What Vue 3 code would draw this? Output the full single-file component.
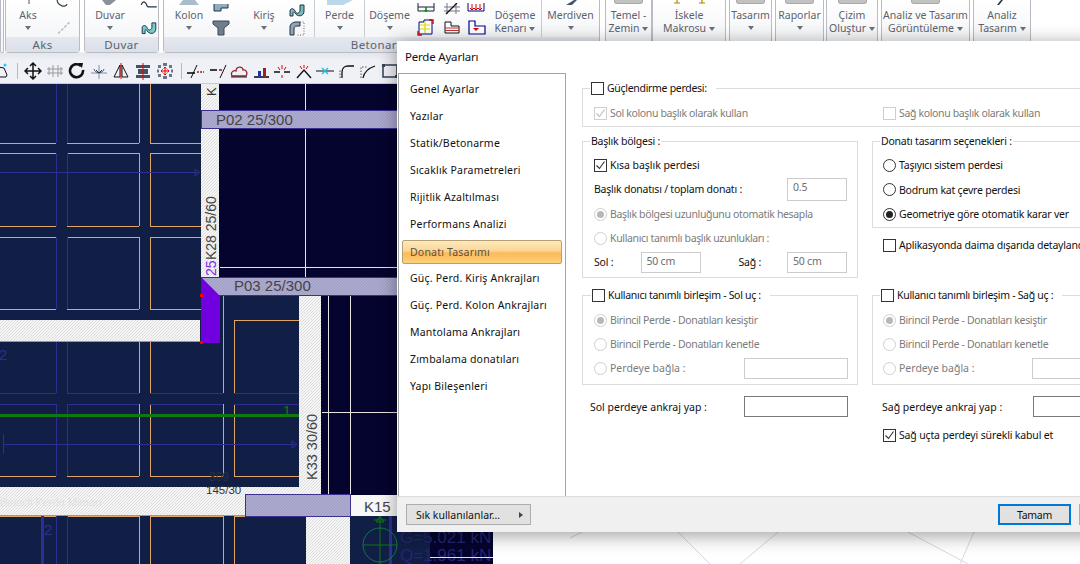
<script setup>
const menu = ['Genel Ayarlar','Yazılar','Statik/Betonarme','Sıcaklık Parametreleri','Rijitlik Azaltılması','Performans Analizi','Donatı Tasarımı','Güç. Perd. Kiriş Ankrajları','Güç. Perd. Kolon Ankrajları','Mantolama Ankrajları','Zımbalama donatıları','Yapı Bileşenleri']
</script>

<template>
  <div class="screen">
    <div class="ribbon">
      <div class="panel stub"></div>
      <div class="panel aks">
        <div class="tool w44">
          <svg class="top" width="20" height="5" viewBox="0 0 20 5"><path d="M11 0v4" stroke="#555" /></svg>
          <span>Aks</span><i class="drop"></i>
        </div>
        <div class="icons one">
          <svg width="18" height="18" viewBox="0 0 18 18"><path d="M2 0c0 3 2 5 5 6 2 1 5 0 5-2" fill="none" stroke="#345" stroke-width="1.3"/></svg>
          <svg width="18" height="18" viewBox="0 0 18 18"><path d="M3 15L15 3" stroke="#bbb" stroke-width="1.5" stroke-dasharray="3 1.5"/></svg>
        </div>
        <b class="cap">Aks</b>
      </div>
      <div class="panel duvar">
        <div class="tool w50">
          <svg class="top" width="24" height="5" viewBox="0 0 24 5"><path d="M4 0h14l-6 5H8z" fill="#8a9099"/></svg>
          <span>Duvar</span><i class="drop"></i>
        </div>
        <div class="icons one">
          <svg width="20" height="18" viewBox="0 0 20 18"><path d="M2 5c2-5 5-3 6 1l1 1h9" fill="none" stroke="#234" stroke-width="1.3"/></svg>
          <svg width="20" height="18" viewBox="0 0 20 18"><path d="M3 15V9c0-3 4-3 5 0s4 3 5 0V4h4v6c0 6-7 6-9 2-1-2-2-1-2 0v3z" fill="#7cc" stroke="#234"/></svg>
        </div>
        <b class="cap">Duvar</b>
      </div>
      <div class="panel beton">
        <div class="betonRow">
          <div class="tool kolon">
            <svg class="top" width="24" height="5" viewBox="0 0 24 5"><path d="M6 0h12l4 5H2z" fill="#a9bccb"/></svg>
            <span>Kolon</span><i class="drop"></i>
          </div>
          <div class="icons narrow">
            <svg width="18" height="16" viewBox="0 0 18 16"><path d="M2-6h14v10H9v3H2z" fill="#8eabc0" stroke="#234"/></svg>
            <svg width="18" height="16" viewBox="0 0 18 16"><path d="M1 1h16v3l-5 4v7H6V8L1 4z" fill="#6d7f8e" stroke="#445"/></svg>
          </div>
          <div class="tool kiris">
            <span>Kiriş</span><i class="drop"></i>
          </div>
          <div class="icons wide">
            <svg width="20" height="16" viewBox="0 0 20 16"><path d="M3 12V7c0-3 4-3 5 0s4 3 5 0V1h4v6c0 6-7 6-9 2-1-2-2-1-2 0v3z" fill="#7bb" stroke="#234"/></svg>
            <svg width="20" height="16" viewBox="0 0 20 16"><path d="M3 15V7c0-3 3-5 6-5h4v4h-3c-2 0-3 1-3 3v6z" fill="#8ea6b8" stroke="#234"/><path d="M13 2h4v13h-7" fill="none" stroke="#666" stroke-dasharray="1 1.5"/></svg>
          </div>
          <div class="tool perde sep">
            <svg class="top" width="30" height="5" viewBox="0 0 30 5"><path d="M2 0h26l-10 5H2z" fill="#bcd6ea"/></svg>
            <span>Perde</span><i class="drop"></i>
          </div>
          <div class="tool doseme sep">
            <span>Döşeme</span><i class="drop"></i>
          </div>
          <div class="icons three">
            <svg width="20" height="14" viewBox="0 0 20 14"><path d="M1-4h16v12H1zM1 4h16M9 4v4" fill="none" stroke="#123"/><path d="M9 4v5M7 7l2 2 2-2" fill="none" stroke="#0a0" /></svg>
            <svg width="20" height="14" viewBox="0 0 20 14"><path d="M2 4h16M2 8h16M5 0v11M14 0v11" stroke="#778"/><path d="M4 11L15 0" stroke="#111" stroke-width="1.2"/></svg>
            <svg width="20" height="14" viewBox="0 0 20 14"><path d="M1-3h16v11H1z" fill="none" stroke="#008"/><path d="M5 1v5M9 1v5M13 1v5M3 5l2 2 2-2M7 5l2 2 2-2M11 5l2 2 2-2" fill="none" stroke="#d00"/></svg>
            <svg width="20" height="18" viewBox="0 0 20 18"><path d="M2 15V3h5v-2h8v14z" fill="#fff" stroke="#008"/><path d="M3 6h10M3 10h10M8 2v12" stroke="#dd0" stroke-width="1.2"/><path d="M1 12v4h4M12 1h4v4" fill="none" stroke="#d00" stroke-width="1.4"/></svg>
            <svg width="20" height="18" viewBox="0 0 20 18"><path d="M3 14V3h6v4h8v7z" fill="#fff" stroke="#111"/><path d="M3 9h14M3 11.5h14" stroke="#b33"/></svg>
            <svg width="20" height="18" viewBox="0 0 20 18"><path d="M2 2h6v5h10v8H2z" fill="#fff" stroke="#008" stroke-width="1.2"/><path d="M6 9h6l-3 3z" fill="#d00"/></svg>
          </div>
          <div class="tool kenar">
            <span>Döşeme</span><span>Kenarı<i class="drop in"></i></span>
          </div>
          <div class="tool merdiven sep">
            <svg class="top" width="14" height="5" viewBox="0 0 14 5"><path d="M2 5L10 0h3L8 5z" fill="#456"/></svg>
            <span>Merdiven</span><i class="drop"></i>
          </div>
        </div>
        <b class="cap">Betonarme</b>
      </div>
      <div class="panel p-temel">
        <u class="nub"></u><span>Temel -</span><span>Zemin<i class="drop in"></i></span>
      </div>
      <div class="panel p-iskele">
        <svg class="top" width="34" height="5" viewBox="0 0 34 5"><path d="M5 0v3M2 3h6M30 0v3M27 3h6" stroke="#a80" stroke-width="1.2"/></svg>
        <span>İskele</span><span>Makrosu<i class="drop in"></i></span>
      </div>
      <div class="panel p-tasarim"><u class="nub"></u><span>Tasarım</span><i class="drop"></i></div>
      <div class="panel p-rapor"><u class="nub"></u><span>Raporlar</span><i class="drop"></i></div>
      <div class="panel p-cizim"><u class="nub"></u><span>Çizim</span><span>Oluştur<i class="drop in"></i></span></div>
      <div class="panel p-analiz"><u class="nub"></u><span>Analiz ve Tasarım</span><span>Görüntüleme<i class="drop in"></i></span></div>
      <div class="panel p-son">
        <svg class="top" width="14" height="5" viewBox="0 0 14 5"><path d="M2 5L6 0h2L4 5z" fill="#234"/></svg>
        <span>Analiz</span><span>Tasarım<i class="drop in"></i></span>
      </div>
    </div>

    <div class="toolbar">
      <svg width="10" height="20" viewBox="4 0 10 20"><path d="M-4 10l6-4 6 1 3 7-1 2H0z" fill="none" stroke="#111"/><circle cx="9" cy="4" r="1.5" fill="#2cf"/></svg>
      <em class="bar"></em>
      <div class="tgroup first">
        <svg width="18" height="20" viewBox="0 0 18 20"><path d="M9 2v16M1 10h16M6 5l3-3 3 3M6 15l3 3 3-3M4 7l-3 3 3 3M14 7l3 3-3 3" fill="none" stroke="#111" stroke-width="1.5"/></svg>
        <svg width="18" height="20" viewBox="0 0 18 20"><path d="M7 4v12M12 4v12M1 8h16M1 12h16M3 6v8M15 6v8" stroke="#999"/></svg>
        <svg width="18" height="20" viewBox="0 0 18 20"><path d="M13 5a6.5 6.5 0 1 0 2 4" fill="none" stroke="#111" stroke-width="2.6"/><path d="M10 2l5 0-1 5z" fill="#111"/></svg>
        <svg width="18" height="20" viewBox="0 0 18 20"><path d="M1 12h16M9 4v14" stroke="#7f8fa5"/><path d="M4 8c1 5 9 5 10 0" fill="none" stroke="#456"/><path d="M6 9l3 3 3-3" fill="none" stroke="#234"/></svg>
        <svg width="18" height="20" viewBox="0 0 18 20"><path d="M8 4L2 16h6zM10 4l6 12h-6z" fill="none" stroke="#111"/><path d="M9 2v16" stroke="#d00"/></svg>
        <svg width="18" height="20" viewBox="0 0 18 20"><path d="M2 4h14v3H2zM4 8h10v5H4zM2 14h14v3H2z" fill="#3d5566"/><path d="M9 2v17" stroke="#e00"/></svg>
        <svg width="18" height="20" viewBox="0 0 18 20"><path d="M2 4h3v3H2zM7 2h4v3H7zM13 4h3v3h-3zM2 13h3v3H2zM7 15h4v3H7zM13 13h3v3h-3zM1 8.500h2v3H1zM15 8.500h2v3h-2z" fill="#678"/><path d="M9 6v8M5 10h8M7.500 7.500L9 6l1.500 1.500M7.500 12.500L9 14l1.500-1.500M6.500 8.500L5 10l1.500 1.500M11.500 8.500L13 10l-1.500 1.500" fill="none" stroke="#e00"/></svg>
      </div>
      <em class="bar b2"></em>
      <svg width="18" height="20" viewBox="0 0 18 20"><path d="M0 12h8" stroke="#111" stroke-width="1.6"/><path d="M4 17L10 4" stroke="#111"/><path d="M10 11h7" stroke="#922" stroke-dasharray="2 1" stroke-width="1.6"/></svg>
      <svg width="18" height="20" viewBox="0 0 18 20"><path d="M1 9h7" stroke="#111" stroke-width="1.6"/><path d="M10 9h3" stroke="#922" stroke-width="1.6"/><path d="M11 17L17 4" stroke="#111"/></svg>
      <svg width="18" height="20" viewBox="0 0 18 20"><path d="M2 15c-2-4 2-6 4-5 0-5 7-5 7-1 3-1 5 3 3 6z" fill="none" stroke="#922" stroke-width="1.3"/><path d="M1 16h16" stroke="#222"/></svg>
      <svg width="18" height="20" viewBox="0 0 18 20"><path d="M2 16h15" stroke="#111" stroke-width="1.6"/><path d="M6 10h3v6H6z" fill="#23a"/><path d="M11 7h3v9h-3z" fill="#922"/></svg>
      <svg width="18" height="20" viewBox="0 0 18 20"><path d="M1 11h6M11 11h6" stroke="#111" stroke-width="1.6"/><path d="M9 4v4M9 14v3M5 6l2 3M13 6l-2 3" stroke="#d00"/></svg>
      <svg width="18" height="20" viewBox="0 0 18 20"><path d="M2 17l7-8 7 8" fill="none" stroke="#111" stroke-width="1.4"/><path d="M9 4v3M5 5l2 3M13 5l-2 3" stroke="#d00"/></svg>
      <svg width="18" height="20" viewBox="0 0 18 20"><path d="M0 10h18" stroke="#111"/><path d="M6 7l6 6M12 7l-6 6" stroke="#2bd" stroke-width="1.4"/></svg>
      <svg width="18" height="20" viewBox="0 0 18 20"><path d="M4 17V11c0-4 3-6 6-6h6" fill="none" stroke="#111" stroke-width="1.3"/><path d="M2 17V8" stroke="#555" stroke-dasharray="1.500 1.500"/></svg>
      <svg width="18" height="20" viewBox="0 0 18 20"><path d="M4 17c1-6 6-10 12-12" fill="none" stroke="#111" stroke-width="1.3"/><path d="M2 17V6h7" fill="none" stroke="#555" stroke-dasharray="1.500 1.500"/></svg>
      <svg width="18" height="20" viewBox="0 0 18 20"><rect x="2" y="4" width="14" height="12" fill="none" stroke="#234" stroke-width="1.4"/><path d="M1 3h3v3H1zM14 14h3v3h-3z" fill="#345"/></svg>
    </div>

    <svg class="canvas" width="1080" height="480" viewBox="0 84 1080 480">
      <defs>
        <pattern id="hatch" width="3" height="3" patternUnits="userSpaceOnUse">
          <rect width="3" height="3" fill="#f6f6f6"/>
          <path d="M0 3L3 0" stroke="#dcdcdc" stroke-width="1"/>
        </pattern>
        <pattern id="band" width="3" height="3" patternUnits="userSpaceOnUse">
          <rect width="3" height="3" fill="#a5a2c9"/>
          <path d="M0 3L3 0" stroke="#b0aed0" stroke-width="1"/>
        </pattern>
      </defs>
      <rect x="0" y="84" width="1080" height="480" fill="#111f47"/>
      <rect x="219" y="84" width="300" height="211" fill="#04042e"/>
      <rect x="321" y="295" width="200" height="201" fill="#04042e"/>
      <rect x="430" y="516" width="70" height="48" fill="#04042e"/>

      <path d="M0 143.500h56M67 143.500h72M150 143.500h51M0 153.500h56M67 153.500h72M150 153.500h51M0 226.500h56M67 226.500h72M150 226.500h51M0 237.500h56M67 237.500h72M150 237.500h51M0 309.500h56M67 309.500h72M150 309.500h51M139.500 84v59M150.500 84v59M139.500 153v73M150.500 153v73M139.500 237v72M150.500 237v72M223.500 296v46M234.500 320v22M234 320.500h65M139.500 342v51M150.500 342v51M223.500 342v51M234.500 342v51M139.500 404v72M150.500 404v72M223.500 404v72M234.500 404v72M0 476.500h56M67 476.500h72M150 476.500h73M234 476.500h65M139.500 516v48M150.500 516v48M223.500 516v48M234.500 516v48M0 516.500h56M67 516.500h72M150 516.500h73M234 516.500h72" stroke="#e0a563" fill="none"/>
      <path d="M56.500 84v59M67.500 84v59M56.500 153v73M67.500 153v73M56.500 237v72M67.500 237v72M56.500 342v51M67.500 342v51M56.500 404v72M67.500 404v72M56.500 516v48M67.500 516v48M0 393.500h56M67 393.500h72M150 393.500h73M234 393.500h65M0 404.500h56M67 404.500h72M150 404.500h73M234 404.500h65" stroke="#2e2e90" fill="none"/>
      <path d="M0 172.500h198M195 169v7l5-3.500zM3.500 434v20M3 444.500h292M292 441v7l5-3.500z" stroke="#2e2e90" fill="none"/>
      <path d="M305.500 84v211M220 267.500h178M328.500 295v201M350.500 295v201M322 412.500h76" stroke="#e8e4e0" fill="none"/>
      <path d="M0 415.500h299" stroke="#117711" stroke-width="3"/>
      <text x="283" y="416" class="t" font-size="14" fill="#117711">1</text>
      <text x="-1" y="360" class="t" font-size="15" fill="#2e2e90">2</text>

      <rect x="0" y="320" width="200" height="22" fill="url(#hatch)"/>
      <rect x="201" y="84" width="18" height="193" fill="url(#hatch)"/>
      <rect x="299" y="296" width="22" height="200" fill="url(#hatch)"/>
      <rect x="0" y="487" width="299" height="29" fill="url(#hatch)"/>
      <rect x="306" y="516" width="44" height="48" fill="url(#hatch)"/>
      <rect x="0" y="341" width="200" height="1" fill="#9a9a9a"/>
      <rect x="0" y="515" width="245" height="1" fill="#9a9a9a"/>

      <rect x="201.500" y="110.500" width="200" height="18" fill="url(#band)" stroke="#3a3090"/>
      <rect x="201.500" y="277.500" width="200" height="18" fill="url(#band)" stroke="#3a3090"/>
      <text x="216" y="125" class="t" font-size="15" fill="#444">P02 25/300</text>
      <text x="234" y="291" class="t" font-size="15" fill="#444">P03 25/300</text>
      <path d="M201 277L220 296V343H201z" fill="#7000e0"/>
      <rect x="200" y="341" width="3" height="3" fill="#f00"/>
      <rect x="200" y="294" width="3" height="3" fill="#f00"/>
      <rect x="245.500" y="494.500" width="105" height="22" fill="url(#band)" stroke="#3a3090"/>
      <rect x="351" y="495" width="50" height="21" fill="#f8f8f8"/>
      <text x="364" y="512" class="t" font-size="15" fill="#444">K15</text>
      <text transform="translate(216 96) rotate(-90)" class="t" font-size="13" fill="#333">K</text>
      <text transform="translate(216 260) rotate(-90)" class="t" font-size="14" fill="#444">K28 25/60</text>
      <text transform="translate(216 276) rotate(-90)" class="t" font-size="14" fill="#7a2be8">25</text>
      <text transform="translate(317 480) rotate(-90)" class="t" font-size="14.500" fill="#444">K33 30/60</text>
      <text x="209" y="481" class="t" font-size="12" fill="#2a3040">309</text>
      <text x="206" y="494" class="t" font-size="11.500" fill="#333">145/30</text>
      <text x="0" y="506" class="t" font-size="11" fill="#e2e2e2">Birincil Perde Mimarı</text>
      <text x="44" y="535" class="t" font-size="15" fill="#2e2e90">2</text>
      <path d="M42.500 516v48M390.500 516v48" stroke="#2e2e90" stroke-width="3"/>
      <circle cx="380" cy="545" r="17" fill="none" stroke="#117744"/>
      <path d="M374 520h12M380 516v48M363 545h34M376 522l4-6 4 6z" stroke="#117711" fill="none"/>
      <text x="400" y="543" class="t" font-size="17" fill="#262670">G=5.021 kN</text>
      <text x="400" y="561" class="t" font-size="17" fill="#262670">Q=1.961 kN</text>
      <path d="M430 557.500h63" stroke="#e8e4e0"/>
      <rect x="493" y="516" width="600" height="48" fill="#fff"/>
      <path d="M570 538l12-6M678 532l32 32M778 532l-38 32M908 532l60 32M974 532l-14 32" stroke="#d8d8de" fill="none"/>
    </svg>

    <div class="dialog">
      <div class="title">Perde Ayarları</div>
      <div class="body">
        <ul class="menu">
          <li v-for="m in menu" :key="m" :class="{ on: m === 'Donatı Tasarımı' }">{{ m }}</li>
        </ul>
        <div class="pane">
          <section class="group g-top">
            <label class="legend lg-check wider"><s class="cb"></s>Güçlendirme perdesi:</label>
            <div class="two">
              <div class="line off"><s class="cb dis"><svg width="11" height="11" viewBox="0 0 11 11"><path d="M1.500 5.500l3 3 5-7" fill="none" stroke="#bbb" stroke-width="1.100"/></svg></s>Sol kolonu başlık olarak kullan</div>
              <div class="line off"><s class="cb dis"></s>Sağ kolonu başlık olarak kullan</div>
            </div>
          </section>

          <div class="cols c-mid">
            <section class="group g-baslik">
              <span class="legend">Başlık bölgesi :</span>
              <div class="line plain"><s class="cb"><svg width="11" height="11" viewBox="0 0 11 11"><path d="M1.500 5.500l3 3 5-7" fill="none" stroke="#333" stroke-width="1.100"/></svg></s>Kısa başlık perdesi</div>
              <div class="line between"><span>Başlık donatısı / toplam donatı :</span><span class="inp dim w60">0.5</span></div>
              <div class="line off gap1"><s class="rb dis sel"></s>Başlık bölgesi uzunluğunu otomatik hesapla</div>
              <div class="line off"><s class="rb dis"></s>Kullanıcı tanımlı başlık uzunlukları :</div>
              <div class="line sol">
                <span class="lab-a">Sol :</span><span class="inp dim w60">50 cm</span>
                <span class="lab-b">Sağ :</span><span class="inp dim w60">50 cm</span>
              </div>
            </section>
            <div>
              <section class="group g-donati">
                <span class="legend">Donatı tasarım seçenekleri :</span>
                <div class="line"><s class="rb"></s>Taşıyıcı sistem perdesi</div>
                <div class="line"><s class="rb"></s>Bodrum kat çevre perdesi</div>
                <div class="line"><s class="rb sel"></s>Geometriye göre otomatik karar ver</div>
              </section>
              <div class="line apl"><s class="cb"></s>Aplikasyonda daima dışarıda detaylandır</div>
            </div>
          </div>

          <div class="cols c-bot">
            <section class="group g-join">
              <label class="legend lg-check"><s class="cb"></s>Kullanıcı tanımlı birleşim - Sol uç :</label>
              <div class="line off"><s class="rb dis sel"></s>Birincil Perde - Donatıları kesiştir</div>
              <div class="line off"><s class="rb dis"></s>Birincil Perde - Donatıları kenetle</div>
              <div class="line off between"><span class="flexr"><s class="rb dis"></s>Perdeye bağla :</span><span class="inp dim w104"></span></div>
            </section>
            <section class="group g-join g-right">
              <label class="legend lg-check"><s class="cb"></s>Kullanıcı tanımlı birleşim - Sağ uç :</label>
              <div class="line off"><s class="rb dis sel"></s>Birincil Perde - Donatıları kesiştir</div>
              <div class="line off"><s class="rb dis"></s>Birincil Perde - Donatıları kenetle</div>
              <div class="line off between"><span class="flexr"><s class="rb dis"></s>Perdeye bağla :</span><span class="inp dim w104"></span></div>
            </section>
          </div>

          <div class="cols c-anc">
            <div class="line between anc"><span>Sol perdeye ankraj yap :</span><span class="inp w104"></span></div>
            <div class="line between anc anc-r"><span>Sağ perdeye ankraj yap :</span><span class="inp w104"></span></div>
          </div>
          <div class="cols">
            <div></div>
            <div class="line surekli"><s class="cb"><svg width="11" height="11" viewBox="0 0 11 11"><path d="M1.500 5.500l3 3 5-7" fill="none" stroke="#333" stroke-width="1.100"/></svg></s>Sağ uçta perdeyi sürekli kabul et</div>
          </div>
        </div>
      </div>
      <div class="footer">
        <div class="btn fav"><span>Sık kullanılanlar…</span><i class="tri"></i></div>
        <div class="btn ok">Tamam</div>
        <div class="btn next"></div>
      </div>
    </div>
  </div>
</template>

<style scoped>
.screen { position: relative; width: 1080px; height: 564px; overflow: hidden; display: flex; flex-direction: column; background: #fff; font-family: "Noto Sans", "Liberation Sans", sans-serif; font-size: 10.5px; color: #111; }
s, u, em, i, b { text-decoration: none; font-style: normal; font-weight: normal; }

.ribbon { display: flex; height: 60px; flex: none; background: linear-gradient(#fff 0, #fff 52px, #e3e6ec 53px, #eef0f5 60px); color: #5b6270; font-size: 10.5px; line-height: 13px; }
.panel { position: relative; height: 53px; box-sizing: border-box; border: 1px solid #b9bcc4; border-top: 0; border-radius: 0 0 4px 4px; background: linear-gradient(#fff, #f5f6f8 37px); flex: none; display: flex; flex-direction: column; align-items: center; padding-top: 9px; text-align: center; }
.panel > span { display: block; white-space: nowrap; }
.stub { width: 4px; margin-right: 1px; }
.aks { width: 75px; flex-direction: row; align-items: flex-start; margin-right: 4px; padding-top: 0; }
.duvar { width: 75px; flex-direction: row; align-items: flex-start; margin-right: 4px; padding-top: 0; }
.beton { width: 437px; padding-top: 0; align-items: stretch; }
.cap { position: absolute; left: 0; right: 0; bottom: 0; height: 15px; line-height: 15px; background: linear-gradient(#e5e8ef, #dbdfe8); color: #5b6270; text-align: center; font-size: 11.5px; letter-spacing: .4px; }
.beton .cap { text-align: right; padding-right: 184px; }
.tool { position: relative; display: flex; flex-direction: column; align-items: center; padding-top: 9px; height: 37px; box-sizing: border-box; flex: none; white-space: nowrap; }
.top { position: absolute; left: 50%; top: 0; transform: translateX(-50%); }
.w44 { width: 44px; }
.w50 { width: 50px; }
.icons { display: flex; flex-direction: column; align-items: center; height: 37px; justify-content: flex-end; padding-bottom: 1px; box-sizing: border-box; flex: none; }
.icons.one { width: 28px; gap: 1px; }
.betonRow { display: flex; height: 37px; }
.kolon { width: 50px; }
.narrow { width: 14px; }
.kiris { width: 59px; padding-left: 13px; }
.wide { width: 20px; }
.perde { width: 50px; margin-left: 7px; }
.doseme { width: 50px; }
.sep { border-left: 1px solid #c9ccd2; }
.three { width: 75px; display: grid; grid-template-columns: repeat(3, 25px); grid-template-rows: 19px 18px; justify-items: center; padding: 0; }
.kenar { width: 52px; }
.merdiven { width: 58px; }
.drop { display: block; width: 0; height: 0; margin-top: 4px; border: 3.5px solid transparent; border-top: 4px solid #6b6f78; border-bottom: 0; }
.drop.in { display: inline-block; margin: 0 0 1px 3px; vertical-align: middle; }
.nub { position: absolute; top: 0; left: 50%; width: 29px; height: 4px; margin-left: -14.5px; background: #c2c2c2; border: 1px solid #aaa; border-top: 0; box-sizing: border-box; border-radius: 0 0 3px 3px; }
.p-temel { width: 47px; margin-left: 5px; }
.p-iskele { width: 74px; }
.p-tasarim { width: 43px; margin-left: 3px; }
.p-rapor { width: 49px; margin-left: 3px; }
.p-cizim { width: 52px; margin-left: 2px; }
.p-analiz { width: 89px; margin-left: 3px; }
.p-son { width: 58px; margin-left: 3px; }

.toolbar { height: 24px; flex: none; display: flex; align-items: center; gap: 3.5px; padding-bottom: 2px; background: #eff1f6; border-bottom: 1px solid #c8cad0; box-sizing: border-box; }
.toolbar svg { flex: none; }
.tgroup { display: flex; gap: 4px; flex: none; }
.bar { width: 1px; height: 16px; background: #b5b8c0; margin: 0 3px; flex: none; }
.bar.b2 { margin: 0 2px 0 3px; }
.canvas { display: block; flex: none; }
.t { font-family: "Liberation Sans", sans-serif; }

.dialog { position: absolute; left: 397px; top: 41px; width: 820px; height: 491px; background: #fff; display: flex; flex-direction: column; box-shadow: 0 3px 18px rgba(0,0,0,.4); }
.title { height: 32px; flex: none; line-height: 32px; padding-left: 8px; font-size: 11.5px; letter-spacing: -.2px; }
.body { flex: 1; display: flex; min-height: 0; }
.menu { list-style: none; margin: 0 0 0 1px; padding: 2px 3px 0; width: 168px; box-sizing: border-box; border: 1px solid #a3a3a3; border-bottom: 0; flex: none; letter-spacing: .2px; }
.menu li { height: 27px; line-height: 26px; padding-left: 8px; }
.menu li.on { height: 24px; line-height: 23px; margin: 1.500px 0; box-sizing: border-box; padding-left: 7px; border: 1px solid #b8a070; border-radius: 2px; color: #5c5040; background: linear-gradient(#fde9c0, #fcd592 45%, #fbb95a 55%, #fdd07c); }
.pane { flex: 1; padding: 15px 0 0 16px; min-width: 0; letter-spacing: -.22px; }
.group { position: relative; border: 1px solid #dcdcdc; box-sizing: border-box; }
.legend { position: absolute; left: 7px; top: -7px; background: #fff; padding: 0 1px; height: 13px; line-height: 13px; display: flex; align-items: center; white-space: nowrap; }
.lg-check { padding-right: 9px; left: 8px; letter-spacing: -.3px; }
.lg-check.wider { left: 7px; letter-spacing: -.3px; }
.g-top { height: 39px; width: 566px; padding: 12px 0 0 11px; }
.two { display: grid; grid-template-columns: 289px 1fr; }
.g-top .line { height: 24px; }
.cols { display: grid; grid-template-columns: 276px 276px; column-gap: 14px; }
.c-mid { margin-top: 14px; }
.g-baslik { height: 137px; padding: 11px 10px 0 11px; }
.g-donati { height: 87px; padding: 11px 0 0 10px; }
.line { display: flex; align-items: center; height: 24px; white-space: nowrap; }
.plain { letter-spacing: -.05px; }
.gap1 { margin-top: 1px; }
.g-donati .line { height: 24.500px; }
.off { color: #7c7c7c; letter-spacing: -.35px; }
.between { justify-content: space-between; }
.flexr { display: flex; align-items: center; letter-spacing: 0; }
.apl { margin: 5px 0 0 11px; }
.c-bot { margin-top: 17px; }
.g-join { height: 90px; padding: 12px 9px 0 11px; }
.g-right { padding-right: 11px; padding-left: 10px; }
.g-right .legend { left: 7px; }
.c-anc { margin-top: 11px; }
.anc { padding: 0 10px 0 8px; height: 21px; letter-spacing: 0; }
.anc-r { padding: 0 11px 0 10px; }
.surekli { margin: 6px 0 0 11px; height: 24px; letter-spacing: -.15px; }
.lab-a { width: 47px; }
.lab-b { width: 49px; margin-left: 38px; }
.cb { flex: none; width: 13px; height: 13px; margin-right: 3px; border: 1px solid #333; box-sizing: border-box; background: #fff; display: flex; align-items: center; justify-content: center; }
.cb.dis { border-color: #cfcfcf; }
.rb { flex: none; position: relative; width: 13px; height: 13px; margin-right: 3px; border: 1px solid #333; border-radius: 50%; box-sizing: border-box; background: #fff; }
.rb.dis { border-color: #cfcfcf; }
.rb.sel::after { content: ""; position: absolute; left: 2px; top: 2px; width: 7px; height: 7px; border-radius: 50%; background: #222; }
.rb.dis.sel::after { background: #b8b8b8; }
.inp { height: 21px; box-sizing: border-box; border: 1px solid #7a7a7a; line-height: 17px; padding-left: 5px; background: #fff; flex: none; }
.inp.dim { border-color: #cccccc; color: #6d6d6d; }
.w60 { width: 60px; height: 21px; }
.g-baslik .between .w60 { height: 23px; }
.w104 { width: 104px; }
.footer { height: 36px; flex: none; background: #f0f0f0; border-top: 1px solid #dcdcdc; box-sizing: border-box; display: flex; align-items: center; padding: 0 0 0 9px; }
.btn { height: 21px; box-sizing: border-box; background: #e1e1e1; border: 1px solid #adadad; display: flex; align-items: center; justify-content: center; flex: none; }
.fav { width: 125px; justify-content: space-between; padding: 0 7px 0 9px; }
.tri { width: 0; height: 0; border: 3px solid transparent; border-left: 4px solid #444; border-right: 0; }
.ok { width: 73px; margin-left: 467px; border: 2px solid #0078d7; letter-spacing: -.3px; }
.next { width: 73px; margin-left: 8px; }
</style>

<style>
body { margin: 0; background: #fff; }
</style>
